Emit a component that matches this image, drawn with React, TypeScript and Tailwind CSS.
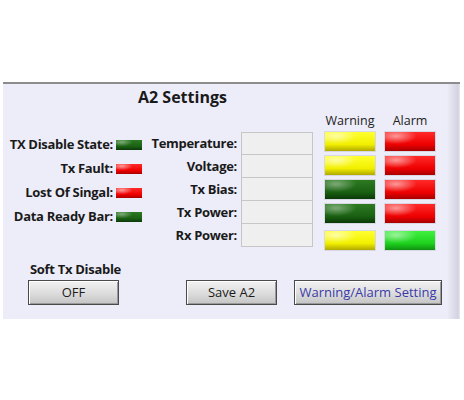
import React from 'react';

type Led = 'red' | 'yellow' | 'dark' | 'green';

const ledClass: Record<Led, string> = {
  red: 'bg-[radial-gradient(ellipse_at_22%_22%,rgba(255,255,255,0.55),transparent_38%),linear-gradient(to_bottom,#ff2a2a,#ee0000_65%,#a80000)]',
  yellow:
    'bg-[radial-gradient(ellipse_at_22%_22%,rgba(255,255,255,0.6),transparent_38%),linear-gradient(to_bottom,#ffff30,#f2f000_65%,#b0a800)]',
  dark: 'bg-[radial-gradient(ellipse_at_22%_22%,rgba(255,255,255,0.4),transparent_38%),linear-gradient(to_bottom,#2c7a22,#1a6012_65%,#0c3808)]',
  green:
    'bg-[radial-gradient(ellipse_at_22%_22%,rgba(255,255,255,0.5),transparent_38%),linear-gradient(to_bottom,#40f040,#1ed21e_65%,#109010)]',
};

const statusRows: { label: string; led: Led }[] = [
  { label: 'TX Disable State:', led: 'dark' },
  { label: 'Tx Fault:', led: 'red' },
  { label: 'Lost Of Singal:', led: 'red' },
  { label: 'Data Ready Bar:', led: 'dark' },
];

const monitorRows: { label: string; warning: Led; alarm: Led }[] = [
  { label: 'Temperature:', warning: 'yellow', alarm: 'red' },
  { label: 'Voltage:', warning: 'yellow', alarm: 'red' },
  { label: 'Tx Bias:', warning: 'dark', alarm: 'red' },
  { label: 'Tx Power:', warning: 'dark', alarm: 'red' },
  { label: 'Rx Power:', warning: 'yellow', alarm: 'green' },
];

const btn =
  'h-[25px] border border-[#4a4a4a] bg-[linear-gradient(to_bottom,#f2f2f2,#dcdcdc_55%,#c4c4c4)] shadow-[inset_1px_1px_0_#ffffff,inset_-1px_-1px_0_#9a9a9a] text-[13px] leading-none';

const App: React.FC = () => {
  return (
    <div className="w-[464px] h-[400px] bg-white pt-[82px] font-['Open_Sans',sans-serif] text-[#1a1a1a]">
      <div className="ml-[3px] w-[457px] h-[237px] border-t-2 border-[#8c8c8c] bg-[linear-gradient(to_right,#ededf9_calc(100%-13px),#d2d2e0_calc(100%-2px),#e8e8f2)]">
        {/* title */}
        <div className="pt-[3px] pl-[135px] h-[22px] text-[16px] font-bold leading-[20px]">A2 Settings</div>

        <div className="flex">
          {/* module status */}
          <div className="w-[139px] mt-[27px] flex flex-col">
            {statusRows.map(r => (
              <div key={r.label} className="h-[24px] flex items-center justify-end gap-[3px]">
                <span className="text-[13px] font-bold tracking-[-0.3px] whitespace-nowrap">{r.label}</span>
                <span className={`shrink-0 w-[26px] h-[10px] ${ledClass[r.led]}`} />
              </div>
            ))}
          </div>

          {/* monitor values */}
          <div className="mt-[26px] flex flex-col">
            {monitorRows.map((r, i) => (
              <div key={r.label} className="flex items-center h-[23px]">
                <span className="w-[95px] text-right text-[13px] font-bold tracking-[-0.3px]">{r.label}</span>
                <div
                  className={`ml-[4px] w-[72px] h-[23px] bg-[#efefef] border-x border-b border-[#c6c6c6] ${i === 0 ? 'border-t' : ''}`}
                />
              </div>
            ))}
          </div>

          {/* warning / alarm flags */}
          <div className="ml-[11px] mt-[7px] flex flex-col">
            <div className="flex gap-[8px] h-[15px] text-[12.5px] leading-[15px] text-[#222]">
              <span className="w-[52px] text-center">Warning</span>
              <span className="w-[52px] text-center">Alarm</span>
            </div>
            {monitorRows.map((r, i) => (
              <div key={r.label} className={`flex gap-[8px] ${i === 4 ? 'mt-[6px]' : 'mt-[3px]'}`}>
                <span className={`w-[52px] h-[21px] border border-[#d8d8e2] ${ledClass[r.warning]}`} />
                <span className={`w-[52px] h-[21px] border border-[#d8d8e2] ${ledClass[r.alarm]}`} />
              </div>
            ))}
          </div>
        </div>

        {/* buttons */}
        <div className="mt-[10px] flex items-end">
          <div className="ml-[25px] flex flex-col w-[91px]">
            <span className="pl-[2px] text-[13px] font-bold leading-[16px] tracking-[-0.3px] whitespace-nowrap">Soft Tx Disable</span>
            <button className={`mt-[3px] w-[91px] ${btn}`}>OFF</button>
          </div>
          <button className={`ml-[67px] w-[91px] ${btn}`}>Save A2</button>
          <button className={`ml-[17px] w-[148px] text-[#3a3aa8] ${btn}`}>Warning/Alarm Setting</button>
        </div>
      </div>
    </div>
  );
};

export default App;
